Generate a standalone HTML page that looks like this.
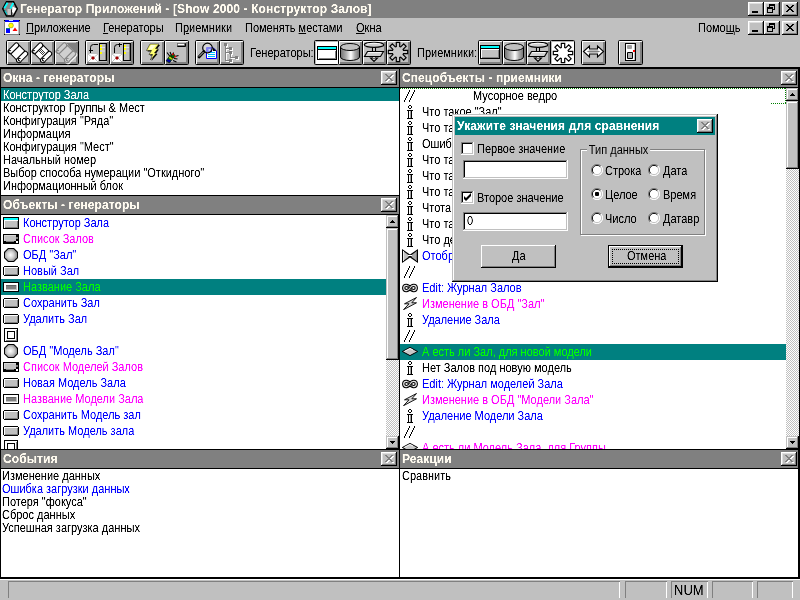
<!DOCTYPE html>
<html><head><meta charset="utf-8">
<style>
*{margin:0;padding:0;box-sizing:border-box}
html,body{width:800px;height:600px;overflow:hidden;background:#c0c0c0}
body{position:relative;font-family:"Liberation Sans",sans-serif;font-size:11px;line-height:13px;color:#000;-webkit-font-smoothing:none}
.a{position:absolute}
.t,.hd span,.st span{filter:url(#thr)}
.t{position:absolute;white-space:nowrap;font-size:12px;transform:scaleX(.9167);transform-origin:0 0}
.t.b{font-weight:bold;transform:none}
.cap svg,.sb svg{display:block}
.cap{position:absolute;width:16px;height:14px;background:#c0c0c0;box-shadow:inset -1px -1px 0 #000,inset 1px 1px 0 #fff,inset -2px -2px 0 #808080,inset 2px 2px 0 #dfdfdf}
.tb{position:absolute;top:40px;width:25px;height:25px;background:#c0c0c0;border:1px solid #000;border-radius:1.5px;box-shadow:inset 1px 1px 0 #fff,inset -2px -2px 0 #808080}
.ti{position:absolute;left:-1px;top:-1px}
.tb.dn{background:#fff;box-shadow:inset 1px 1px 0 #b8b8b8}
.hd{position:absolute;height:18px;background:#808080;color:#fffbf0;font-weight:bold;font-size:12px;line-height:18px;white-space:nowrap}
.hd span{position:absolute;left:2px;top:0;letter-spacing:.08px}
.ln{position:absolute;background:#000}
.w{position:absolute;background:#fff;overflow:hidden}
.r13{position:absolute;left:0;height:13px;line-height:13px;white-space:nowrap;width:100%}
.r16{position:absolute;left:0;height:16px;line-height:16px;white-space:nowrap;width:100%}
.sel{background:#008080}
.bl{color:#00f}.mg{color:#f0f}.gr{color:#0f0}.wh{color:#fff}
.sb{position:absolute;width:13px;background:#c0c0c0;box-shadow:inset -1px -1px 0 #000,inset 1px 1px 0 #c0c0c0,inset -2px -2px 0 #808080,inset 2px 2px 0 #fff}
.trk{position:absolute;width:13px;background-image:conic-gradient(#fff 25%,#c0c0c0 0 50%,#fff 0 75%,#c0c0c0 0);background-size:2px 2px}

.sunk{position:absolute;background:#fff;box-shadow:inset -1px -1px 0 #fff,inset 1px 1px 0 #808080,inset -2px -2px 0 #c0c0c0,inset 2px 2px 0 #000}
.pb{position:absolute;width:75px;height:23px;background:#c0c0c0;text-align:center;line-height:23px;box-shadow:inset -1px -1px 0 #000,inset 1px 1px 0 #fff,inset -2px -2px 0 #808080,inset 2px 2px 0 #c0c0c0}
.pb .t{line-height:13px}
.rd{position:absolute;width:12px;height:12px}
.st{position:absolute;top:581px;height:17px;box-shadow:inset 1px 1px 0 #808080,inset -1px 0 0 #fff}
u{text-decoration:underline}
</style></head><body>
<svg width="0" height="0" style="position:absolute" shape-rendering="crispEdges"><defs>
<radialGradient id="gob" cx="45%" cy="50%" r="55%"><stop offset="0" stop-color="#fff"/><stop offset=".55" stop-color="#d0d0d0"/><stop offset="1" stop-color="#909090"/></radialGradient>
<symbol id="iw" viewBox="0 0 16 12"><rect width="16" height="12" fill="#000"/><rect x="1" y="1" width="14" height="10" fill="#c0c0c0"/><rect x="1" y="1" width="14" height="2" fill="#0ff"/><rect x="1" y="3" width="14" height="1" fill="#fff"/><rect x="1" y="3" width="1" height="8" fill="#fff"/><rect x="14" y="4" width="1" height="7" fill="#808080"/><rect x="2" y="10" width="13" height="1" fill="#808080"/></symbol>
<symbol id="il" viewBox="0 0 16 10"><rect width="16" height="10" fill="#000"/><rect x="1" y="1" width="12" height="6" fill="#c0c0c0"/><rect x="1" y="1" width="12" height="1" fill="#d8d8d8"/><rect x="1" y="1" width="1" height="6" fill="#d8d8d8"/><rect x="3" y="7" width="8" height="1" fill="#808080"/><rect x="13" y="3" width="2" height="2" fill="#808080"/><rect x="13" y="7" width="2" height="2" fill="#fff"/></symbol>
<symbol id="io" viewBox="0 0 14 14"><polygon points="4,0 10,0 14,4 14,10 10,14 4,14 0,10 0,4" fill="#000"/><polygon points="4.5,1 9.5,1 13,4.5 13,9.5 9.5,13 4.5,13 1,9.5 1,4.5" fill="url(#gob)"/></symbol>
<symbol id="ib" viewBox="0 0 16 10"><rect x="1" width="14" height="10" fill="#000"/><rect y="1" width="16" height="8" fill="#000"/><rect x="1" y="1" width="14" height="8" fill="#c0c0c0"/><rect x="1" y="1" width="14" height="1" fill="#fff"/><rect x="1" y="1" width="1" height="8" fill="#fff"/><rect x="14" y="2" width="1" height="7" fill="#808080"/><rect x="2" y="8" width="13" height="1" fill="#808080"/></symbol>
<symbol id="ie" viewBox="0 0 16 10"><rect width="16" height="10" fill="#000"/><rect x="1" y="1" width="14" height="8" fill="#fff"/><rect x="3" y="3" width="10" height="4" fill="#808080"/><rect x="3" y="3" width="10" height="1" fill="#606060"/><rect x="13" y="3" width="1" height="5" fill="#c0c0c0"/><rect x="3" y="7" width="11" height="1" fill="#c0c0c0"/></symbol>
<symbol id="is" viewBox="0 0 14 14"><rect width="14" height="14" fill="#000"/><rect x="1" y="1" width="12" height="12" fill="#fff"/><rect x="12" y="2" width="1" height="11" fill="#808080"/><rect x="2" y="12" width="11" height="1" fill="#808080"/><rect x="3" y="3" width="8" height="8" fill="#000"/><rect x="4" y="4" width="6" height="6" fill="#fff"/></symbol>
<symbol id="ii" viewBox="0 0 7 14"><rect x="2" y="0" width="2" height="1"/><rect x="1" y="1" width="1" height="2"/><rect x="4" y="1" width="1" height="2"/><rect x="2" y="3" width="2" height="1"/><rect x="0" y="5" width="6" height="1"/><rect x="1" y="6" width="1" height="7"/><rect x="4" y="6" width="1" height="7"/><rect x="3" y="6" width="1" height="7" fill="#a0a0a0"/><rect x="0" y="13" width="6" height="1"/></symbol>
<symbol id="sl" viewBox="0 0 11 12"><path d="M5 0h1v2h-1zM4 2h1v2h-1zM3 4h1v2h-1zM2 6h1v2h-1zM1 8h1v2h-1zM0 10h1v2h-1zM10 0h1v2h-1zM9 2h1v2h-1zM8 4h1v2h-1zM7 6h1v2h-1zM6 8h1v2h-1zM5 10h1v2h-1z"/></symbol>
<symbol id="bt" viewBox="0 0 16 14"><polygon points="0,0 8,5.5 16,0 16,14 8,8.5 0,14" fill="#000"/><polygon points="1,2 6.5,6 6.5,8 1,12" fill="#c0c0c0"/><polygon points="15,2 9.5,6 9.5,8 15,12" fill="#a8a8a8"/><rect x="6" y="6" width="4" height="1" fill="#fff"/><rect x="1" y="2" width="1" height="10" fill="#e8e8e8"/><rect x="14" y="3" width="1" height="9" fill="#808080"/></symbol>
<symbol id="ch" viewBox="0 0 16 10" shape-rendering="auto"><path id="inf" d="M8 5C6.300 1.800 2 1.300 1.700 5C2 8.700 6.300 8.200 8 5C9.700 1.800 14 1.300 14.300 5C14 8.700 9.700 8.200 8 5z" fill="none" stroke="#000" stroke-width="3.300"/><path d="M8 5C6.300 1.800 2 1.300 1.700 5C2 8.700 6.300 8.200 8 5C9.700 1.800 14 1.300 14.300 5C14 8.700 9.700 8.200 8 5z" fill="none" stroke="#e8e8e8" stroke-width="1.200"/><path d="M6 2.500L10 7.500" stroke="#000" stroke-width=".8"/></symbol>
<symbol id="lt" viewBox="0 0 14 13" shape-rendering="auto"><polygon points="13.500,0.500 1.500,6.800 6,6.800 0.500,12.700 13.500,5.800 8.800,5.800" fill="#d8d8d8" stroke="#000" stroke-width=".9"/></symbol>
<symbol id="dm" viewBox="0 0 16 9" shape-rendering="auto"><polygon points="0.300,4.500 8,0.400 15.700,4.500 8,8.600" fill="#c8c8c8" stroke="#000" stroke-width="1"/><path d="M2.500 4.300L8 1.500L11 3" fill="none" stroke="#fff" stroke-width=".9"/></symbol>
<symbol id="gx" viewBox="0 0 16 14"><path d="M4 3h2v1h-2zM10 3h2v1h-2zM5 4h2v1h-2zM9 4h2v1h-2zM6 5h4v1h-4zM7 6h2v1h-2zM6 7h4v1h-4zM5 8h2v1h-2zM9 8h2v1h-2zM4 9h2v1h-2zM10 9h2v1h-2z"/></symbol>
<symbol id="gxd" viewBox="0 0 16 14"><path d="M5 4h2v1h-2zM11 4h2v1h-2zM6 5h2v1h-2zM10 5h2v1h-2zM7 6h4v1h-4zM8 7h2v1h-2zM7 8h4v1h-4zM6 9h2v1h-2zM10 9h2v1h-2zM5 10h2v1h-2zM11 10h2v1h-2z" fill="#fff"/><path d="M4 3h2v1h-2zM10 3h2v1h-2zM5 4h2v1h-2zM9 4h2v1h-2zM6 5h4v1h-4zM7 6h2v1h-2zM6 7h4v1h-4zM5 8h2v1h-2zM9 8h2v1h-2zM4 9h2v1h-2zM10 9h2v1h-2z" fill="#808080"/></symbol>
<symbol id="gr" viewBox="0 0 16 14"><path d="M5 2h6v1h-6zM5 3h6v1h-6zM5 4h1v1h-1zM10 4h1v1h-1zM3 5h6v1h-6zM10 5h1v1h-1zM3 6h6v1h-6zM10 6h1v1h-1zM3 7h1v1h-1zM8 7h3v1h-3zM3 8h1v1h-1zM8 8h1v1h-1zM3 9h1v1h-1zM8 9h1v1h-1zM3 10h6v1h-6z"/></symbol>
<symbol id="gm" viewBox="0 0 16 14"><rect x="4" y="9" width="6" height="2"/></symbol>
<symbol id="gup" viewBox="0 0 13 13"><path d="M6 5h1v1h-1zM5 6h3v1h-3zM4 7h5v1h-5z"/></symbol>
<symbol id="gdn" viewBox="0 0 13 13"><path d="M4 5h5v1h-5zM5 6h3v1h-3zM6 7h1v1h-1z"/></symbol>
<symbol id="rad" viewBox="0 0 12 12"><circle cx="6" cy="6" r="5.5" fill="#fff"/><path d="M10 2A5.600 5.600 0 1 0 2 10" fill="none" stroke="#808080" stroke-width="1"/><path d="M2 10A5.600 5.600 0 1 0 10 2" fill="none" stroke="#fff" stroke-width="1"/><path d="M9.300 2.700A4.600 4.600 0 1 0 2.700 9.300" fill="none" stroke="#000" stroke-width="1"/><path d="M2.700 9.300A4.600 4.600 0 1 0 9.300 2.700" fill="none" stroke="#c0c0c0" stroke-width="1"/></symbol>
<filter id="thr" x="0" y="0" width="100%" height="100%" color-interpolation-filters="sRGB"><feComponentTransfer><feFuncA type="table" tableValues="0 .15 .95 1"/></feComponentTransfer></filter>
<symbol id="t1" viewBox="0 0 25 25"><g fill="#fff" stroke="#000" stroke-width="1" shape-rendering="auto" transform="translate(11.900 12.600) rotate(-45)"><rect x="-6.100" y="-4" width="12.200" height="7.800"/><path d="M-4.500 -8.500H4.200a2.250 2.250 0 0 1 0 4.500H-4.500a2.250 2.250 0 0 1 0-4.500z"/><path d="M-5.600 3.800H4.500a2.300 2.300 0 0 1 0 4.600H-3.500a2.300 2.300 0 0 1-2.100-4.600z"/><path d="M-5.500 -5a1.300 1.300 0 1 1 1.800 -1.200M-4.200 7.300a1.300 1.300 0 1 1 1.800 -1.200" fill="none"/></g></symbol>
<symbol id="t2" viewBox="0 0 25 25"><g fill="#fff" stroke="#000" stroke-width="1" shape-rendering="auto" transform="translate(11.900 12.600) rotate(-45)"><rect x="-6.100" y="-4" width="12.200" height="7.800"/><path d="M-4.500 -8.500H4.200a2.250 2.250 0 0 1 0 4.500H-4.500a2.250 2.250 0 0 1 0-4.500z"/><path d="M-5.600 3.800H4.500a2.300 2.300 0 0 1 0 4.600H-3.500a2.300 2.300 0 0 1-2.100-4.600z"/><path d="M-5.500 -5a1.300 1.300 0 1 1 1.800 -1.200M-4.200 7.300a1.300 1.300 0 1 1 1.800 -1.200" fill="none"/></g><g fill="#404040"><rect x="10" y="10" width="1" height="1"/><rect x="12" y="10" width="1" height="1"/><rect x="11" y="11" width="1" height="1"/><rect x="13" y="11" width="1" height="1"/><rect x="10" y="12" width="1" height="1"/><rect x="12" y="12" width="1" height="1"/><rect x="14" y="12" width="1" height="1"/><rect x="11" y="13" width="1" height="1"/><rect x="13" y="13" width="1" height="1"/><rect x="12" y="14" width="1" height="1"/><rect x="11" y="9" width="1" height="1"/><rect x="9" y="11" width="1" height="1"/></g></symbol>
<symbol id="t3" viewBox="0 0 25 25"><rect x="12" y="3" width="11" height="9" fill="#808080"/><g transform="translate(1 1)"><g fill="none" stroke="#fff" stroke-width="1" shape-rendering="auto" transform="translate(11.900 12.600) rotate(-45)"><rect x="-6.100" y="-4" width="12.200" height="7.800"/><path d="M-4.500 -8.500H4.200a2.250 2.250 0 0 1 0 4.500H-4.500a2.250 2.250 0 0 1 0-4.500z"/><path d="M-5.600 3.800H4.500a2.300 2.300 0 0 1 0 4.600H-3.500a2.300 2.300 0 0 1-2.100-4.600z"/><path d="M-5.500 -5a1.300 1.300 0 1 1 1.800 -1.200M-4.200 7.300a1.300 1.300 0 1 1 1.800 -1.200" fill="none"/></g></g><g fill="#d0d0d0" stroke="#808080" stroke-width="1" shape-rendering="auto" transform="translate(11.900 12.600) rotate(-45)"><rect x="-6.100" y="-4" width="12.200" height="7.800"/><path d="M-4.500 -8.500H4.200a2.250 2.250 0 0 1 0 4.500H-4.500a2.250 2.250 0 0 1 0-4.500z"/><path d="M-5.600 3.800H4.500a2.300 2.300 0 0 1 0 4.600H-3.500a2.300 2.300 0 0 1-2.100-4.600z"/><path d="M-5.500 -5a1.300 1.300 0 1 1 1.800 -1.200M-4.200 7.300a1.300 1.300 0 1 1 1.800 -1.200" fill="none"/></g></symbol>
<symbol id="t4" viewBox="0 0 25 25"><g transform="translate(1 0)"><rect x="2" y="14" width="10" height="8" fill="#fff"/><path d="M2 14l5 4l5-4M2 22l4-4M12 22l-4-4" fill="none" stroke="#b0b0b0" stroke-width=".8" shape-rendering="auto"/><rect x="6" y="17" width="2" height="2" fill="#a00000"/><rect x="5" y="17.500" width="4" height="1" fill="#a00000"/><rect x="6.500" y="16" width="1" height="4" fill="#a00000"/><rect x="13" y="3" width="8" height="18" fill="#000"/><rect x="14" y="4" width="5" height="16" fill="#c0c0c0"/><rect x="19" y="4" width="1" height="16" fill="#808080"/><rect x="14" y="7" width="5" height="1" fill="#e0e0e0"/><rect x="14" y="10.500" width="5" height="1" fill="#e0e0e0"/><rect x="14" y="5" width="2" height="2" fill="#ff0"/><rect x="14" y="8" width="2" height="2" fill="#ff0"/><rect x="14" y="12" width="2" height="2" fill="#ff0"/><path d="M4.500 13V7.500a3 3 0 0 1 3-3H12" fill="none" stroke="#000" stroke-width="1" shape-rendering="auto"/><rect x="3" y="10" width="4" height="1"/></g></symbol>
<symbol id="t5" viewBox="0 0 25 25"><g transform="translate(1 0)"><rect x="2" y="14" width="10" height="8" fill="#fff"/><path d="M2 14l5 4l5-4M2 22l4-4M12 22l-4-4" fill="none" stroke="#b0b0b0" stroke-width=".8" shape-rendering="auto"/><rect x="6" y="17" width="2" height="2" fill="#a00000"/><rect x="5" y="17.500" width="4" height="1" fill="#a00000"/><rect x="6.500" y="16" width="1" height="4" fill="#a00000"/><rect x="13" y="3" width="8" height="18" fill="#000"/><rect x="14" y="4" width="5" height="16" fill="#c0c0c0"/><rect x="19" y="4" width="1" height="16" fill="#808080"/><rect x="14" y="7" width="5" height="1" fill="#e0e0e0"/><rect x="14" y="10.500" width="5" height="1" fill="#e0e0e0"/><rect x="14" y="5" width="2" height="2" fill="#ff0"/><rect x="14" y="8" width="2" height="2" fill="#ff0"/><rect x="14" y="12" width="2" height="2" fill="#ff0"/><path d="M4.500 13V7.500a3 3 0 0 1 3-3H12" fill="none" stroke="#000" stroke-width="1" shape-rendering="auto"/><rect x="9" y="3" width="1" height="4"/></g></symbol>
<symbol id="t6" viewBox="0 0 25 25"><g shape-rendering="auto"><polygon points="11,5 20,5 16.500,9.500 19,9.500 15.500,14 17.500,14 11.500,21 13.500,15.500 10,15.500 12.500,11.500 7.500,11.500" fill="#000"/><polygon points="10,4 19,4 15.500,8.500 18,8.500 14.500,13 16.500,13 10.500,20 12.500,14.500 9,14.500 11.500,10.500 6.500,10.500" fill="#ffff70" stroke="#000" stroke-width=".5"/><polygon points="11,5 16,5 12,9.500 8.500,9.500" fill="#fff" opacity=".7"/></g></symbol>
<symbol id="t7" viewBox="0 0 25 25"><rect x="13" y="3" width="9" height="4" rx="1" fill="#000"/><rect x="13" y="3" width="8" height="3" rx="1" fill="#808080"/><rect x="14" y="4" width="6" height="1" fill="#fff"/><g shape-rendering="auto"><path d="M3 12.500l3 4M6 12l1.500 3.500M9.500 12.500l-.5 3M10 18.500l3.500 .5M9 20.500l3.500 1.500M11 16.500l3.500-1" stroke="#000" stroke-width="1.100" fill="none"/><polygon points="2,21 6,15.500 9.500,17.500 5.500,22.800" fill="#008000" stroke="#000" stroke-width=".7"/><polygon points="2.300,20.800 3.800,18.800 7,20.800 5.500,22.600" fill="#0000a0"/><polygon points="4.600,17.800 5.600,16.400 8.800,18.300 7.800,19.700" fill="#c8c800"/><circle cx="9" cy="16" r="1.900" fill="#006000" stroke="#000" stroke-width=".5"/><rect x="8" y="13.500" width="1.600" height="1.600" fill="#f00"/><rect x="10.500" y="15.800" width="1.600" height="1.600" fill="#f00"/></g></symbol>
<symbol id="t8" viewBox="0 0 25 25"><g shape-rendering="auto" transform="translate(1 0)"><polygon points="10.500,7.500 17,7.500 20.500,11 20.500,18.500 10.500,18.500" fill="#fff" stroke="#00f" stroke-width="1"/><path d="M12 12.500h7M12 14.500h7M12 16.500h7" stroke="#00c0ff" stroke-width="1"/><rect x="11" y="8" width="5" height="4" fill="#00f"/><rect x="12.500" y="9" width="2" height="2" fill="#80c0ff"/><polygon points="17,7.500 20.500,11 17,11" fill="#000"/><circle cx="11.500" cy="8" r="4.800" fill="#e8e8e8" fill-opacity=".55" stroke="#000" stroke-width="1.200"/><path d="M8 11.500L3 17" stroke="#000" stroke-width="2.800" stroke-linecap="round"/><path d="M7.500 12L3 16.500" stroke="#fff" stroke-width=".8"/></g></symbol>
<symbol id="t9" viewBox="0 0 25 25"><g transform="translate(1 1)" fill="#fff"><rect x="5" y="3" width="3" height="3" fill="#fff"/><rect x="10" y="7" width="3" height="3" fill="#fff"/><rect x="10" y="11" width="3" height="3" fill="#fff"/><rect x="16" y="16" width="3" height="3" fill="#fff"/><rect x="10" y="19" width="3" height="3" fill="#fff"/><rect x="6" y="6" width="1" height="15"/><rect x="7" y="8" width="3" height="1"/><rect x="7" y="12" width="3" height="1"/><rect x="11" y="14" width="1" height="4"/><rect x="12" y="17" width="4" height="1"/><rect x="7" y="20" width="3" height="1"/></g><g transform="translate(0 0)" fill="#808080"><rect x="5" y="3" width="3" height="3" fill="#808080"/><rect x="10" y="7" width="3" height="3" fill="#808080"/><rect x="10" y="11" width="3" height="3" fill="#808080"/><rect x="16" y="16" width="3" height="3" fill="#808080"/><rect x="10" y="19" width="3" height="3" fill="#808080"/><rect x="6" y="6" width="1" height="15"/><rect x="7" y="8" width="3" height="1"/><rect x="7" y="12" width="3" height="1"/><rect x="11" y="14" width="1" height="4"/><rect x="12" y="17" width="4" height="1"/><rect x="7" y="20" width="3" height="1"/></g></symbol>
<symbol id="g1" viewBox="0 0 25 25"><g transform="translate(1 1)"><rect x="2" y="5" width="20" height="14" fill="#000"/><rect x="3" y="6" width="18" height="12" fill="#fff"/><rect x="3" y="6" width="18" height="2" fill="#0ff"/><rect x="3" y="8" width="18" height="1" fill="#000"/><rect x="3" y="9" width="18" height="1" fill="#fff"/><rect x="3" y="9" width="1" height="9" fill="#fff"/><rect x="20" y="10" width="1" height="8" fill="#808080"/><rect x="4" y="17" width="17" height="1" fill="#808080"/></g></symbol>
<symbol id="g1u" viewBox="0 0 25 25"><g transform="translate(0 0)"><rect x="2" y="5" width="20" height="14" fill="#000"/><rect x="3" y="6" width="18" height="12" fill="#c0c0c0"/><rect x="3" y="6" width="18" height="2" fill="#0ff"/><rect x="3" y="8" width="18" height="1" fill="#000"/><rect x="3" y="9" width="18" height="1" fill="#fff"/><rect x="3" y="9" width="1" height="9" fill="#fff"/><rect x="20" y="10" width="1" height="8" fill="#808080"/><rect x="4" y="17" width="17" height="1" fill="#808080"/></g></symbol>
<symbol id="g2" viewBox="0 0 25 25"><defs><linearGradient id="cyl" x1="0" x2="1" y1="0" y2="0"><stop offset="0" stop-color="#707070"/><stop offset=".3" stop-color="#b0b0b0"/><stop offset=".55" stop-color="#fff"/><stop offset=".75" stop-color="#b0b0b0"/><stop offset="1" stop-color="#707070"/></linearGradient></defs><g shape-rendering="auto"><path d="M2.500 7v10a9.500 3.500 0 0 0 19 0V7z" fill="url(#cyl)" stroke="#000" stroke-width="1"/><ellipse cx="12" cy="7" rx="9.500" ry="3.500" fill="#c0c0c0" stroke="#000" stroke-width="1"/></g></symbol>
<symbol id="g3" viewBox="0 0 25 25"><g shape-rendering="auto" fill="#d0d0d0" stroke="#000" stroke-width="1.100"><polygon points="8.500,18 15.500,18 12,21.500"/><rect x="10.500" y="6" width="3" height="12" stroke="none"/><path d="M10.500 7v4.500M13.500 7v4.500M10.500 16.500v1M13.500 16.500v1" fill="none"/><polygon points="5.500,11.500 21.500,11.500 18.500,16.500 2.500,16.500"/><ellipse cx="12" cy="4.800" rx="9.800" ry="2.600"/><path d="M4.500 4.300c3-1.300 11-1.300 14-.2" fill="none" stroke="#fff" stroke-width=".9"/><path d="M6 12.600h13" fill="none" stroke="#fff" stroke-width=".9"/></g></symbol>
<symbol id="g4" viewBox="0 0 25 25"><g shape-rendering="auto" transform="translate(0 0)"><polygon points="17.5,10.3 21.7,10.3 21.7,13.7 17.5,13.7 17.1,14.7 20.1,17.7 17.7,20.1 14.7,17.1 13.7,17.5 13.7,21.7 10.3,21.7 10.3,17.5 9.3,17.1 6.3,20.1 3.9,17.7 6.9,14.7 6.5,13.7 2.3,13.7 2.3,10.3 6.5,10.3 6.9,9.3 3.9,6.3 6.3,3.9 9.3,6.9 10.3,6.5 10.3,2.3 13.7,2.3 13.7,6.5 14.7,6.9 17.7,3.9 20.1,6.3 17.1,9.3" fill="#c8c8c8" stroke="#000" stroke-width="1.200"/></g></symbol>
<symbol id="g4d" viewBox="0 0 25 25"><g shape-rendering="auto" transform="translate(1 1)"><polygon points="17.5,10.3 21.7,10.3 21.7,13.7 17.5,13.7 17.1,14.7 20.1,17.7 17.7,20.1 14.7,17.1 13.7,17.5 13.7,21.7 10.3,21.7 10.3,17.5 9.3,17.1 6.3,20.1 3.9,17.7 6.9,14.7 6.5,13.7 2.3,13.7 2.3,10.3 6.5,10.3 6.9,9.3 3.9,6.3 6.3,3.9 9.3,6.9 10.3,6.5 10.3,2.3 13.7,2.3 13.7,6.5 14.7,6.9 17.7,3.9 20.1,6.3 17.1,9.3" fill="#fff" stroke="#000" stroke-width="1.200"/></g></symbol>
<symbol id="t10" viewBox="0 0 25 25"><g shape-rendering="auto"><polygon points="2.500,11.500 8.500,6 8.500,9 16.500,9 16.500,6 22.500,11.500 16.500,17 16.500,14 8.500,14 8.500,17" fill="#fff" stroke="#000" stroke-width="1.100"/><polygon points="5.500,11.500 8.500,10.400 16.500,10.400 19.500,11.500 16.500,12.600 8.500,12.600" fill="#808080"/></g></symbol>
<symbol id="t11" viewBox="0 0 25 25"><rect x="7" y="3" width="11" height="18" fill="#000"/><rect x="8" y="4" width="8" height="16" fill="#fff"/><rect x="16" y="4" width="1" height="16" fill="#c0c0c0"/><rect x="9" y="5" width="5" height="4" rx="1" fill="#a0a0a0"/><rect x="9" y="12" width="6" height="7" rx="1" fill="#000"/><rect x="10" y="13" width="4" height="5" fill="#b0b0b0"/><rect x="15" y="10" width="2" height="2" fill="#f00"/></symbol>
</defs></svg>

<div id="root" style="position:absolute;left:0;top:0;width:800px;height:600px;will-change:transform">

<!-- title bar -->
<div class="a" style="left:0;top:0;width:800px;height:18px;background:#808080"></div>
<div class="t b" style="left:20px;top:2px;color:#fffbf0;line-height:14px;letter-spacing:.12px">Генератор Приложений - [Show 2000 - Конструктор Залов]</div>
<div class="cap" style="left:748px;top:2px"><svg width="16" height="14"><use href="#gm"/></svg></div>
<div class="cap" style="left:764px;top:2px"><svg width="16" height="14"><use href="#gr"/></svg></div>
<div class="cap" style="left:782px;top:2px"><svg width="16" height="14"><use href="#gx"/></svg></div>

<svg class="a" style="left:2px;top:1px" width="16" height="16" shape-rendering="auto"><polygon points="4.500,0.700 11.500,0.700 15.300,7.800 11.500,15 4.500,15 0.700,7.800" fill="#8c8c8c" stroke="#000" stroke-width="1.500"/><polygon points="10.500,5.500 14.500,7.500 11.500,12.800 10,10.500" fill="#fff"/><polygon points="5.500,8 9,8 9,14 5.500,14" fill="#c4c4c4"/><path d="M5 14L2.500 9M9.500 8.500L9.500 14" stroke="#000" stroke-width=".8" fill="none"/><path d="M2.300 7.200L5.500 1.800M8.300 7.500L11.300 1.800" stroke="#0ff" stroke-width="1.800" fill="none"/><path d="M2.800 9.500L5 13.500" stroke="#00d8d8" stroke-width="1.100" fill="none"/></svg>
<svg class="a" style="left:4px;top:20px" width="16" height="15"><rect x="0" y="0" width="16" height="15" fill="#808080"/><rect x="1" y="1" width="14" height="13" fill="#fff"/><rect x="1" y="0" width="14" height="2" fill="#00f"/><rect x="5" y="0" width="4" height="1" fill="#c0e0ff"/><rect x="0" y="0" width="1" height="1" fill="#000"/><rect x="15" y="0" width="1" height="1" fill="#000"/><rect x="0" y="14" width="1" height="1" fill="#000"/><rect x="15" y="14" width="1" height="1" fill="#000"/><rect x="14" y="2" width="1" height="12" fill="#c0c0c0"/><circle cx="7" cy="5.500" r="2.400" fill="#ff0" stroke="#808000" stroke-width=".5" shape-rendering="auto"/><polygon points="8.500,11 13.500,11 11,7.500" fill="#f00" shape-rendering="auto"/><rect x="2" y="9" width="4" height="4" fill="#00f"/><rect x="2" y="8" width="4" height="1" fill="#008080"/></svg>
<!-- menu bar -->
<div class="t" style="left:26px;top:22px"><u>П</u>риложение</div>
<div class="t" style="left:103px;top:22px"><u>Г</u>енераторы</div>
<div class="t" style="left:175px;top:22px">П<u>р</u>иемники</div>
<div class="t" style="left:245px;top:22px">Поменять <u>м</u>естами</div>
<div class="t" style="left:356px;top:22px"><u>О</u>кна</div>
<div class="t" style="left:698px;top:22px">Помо<u>щ</u>ь</div>
<div class="cap" style="left:748px;top:21px"><svg width="16" height="14"><use href="#gm"/></svg></div>
<div class="cap" style="left:764px;top:21px"><svg width="16" height="14"><use href="#gr"/></svg></div>
<div class="cap" style="left:782px;top:21px"><svg width="16" height="14"><use href="#gx"/></svg></div>

<!-- toolbar -->
<div class="tb" style="left:6px"><svg class="ti" width="25" height="25"><use href="#t1"/></svg></div>
<div class="tb" style="left:30px"><svg class="ti" width="25" height="25"><use href="#t2"/></svg></div>
<div class="tb" style="left:54px"><svg class="ti" width="25" height="25"><use href="#t3"/></svg></div>
<div class="tb" style="left:85px"><svg class="ti" width="25" height="25"><use href="#t4"/></svg></div>
<div class="tb" style="left:109px"><svg class="ti" width="25" height="25"><use href="#t5"/></svg></div>
<div class="tb" style="left:140px"><svg class="ti" width="25" height="25"><use href="#t6"/></svg></div>
<div class="tb" style="left:164px"><svg class="ti" width="25" height="25"><use href="#t7"/></svg></div>
<div class="tb" style="left:195px"><svg class="ti" width="25" height="25"><use href="#t8"/></svg></div>
<div class="tb" style="left:219px"><svg class="ti" width="25" height="25"><use href="#t9"/></svg></div>
<div class="t" style="left:250px;top:47px">Генераторы:</div>
<div class="tb dn" style="left:314px"><svg class="ti" width="25" height="25"><use href="#g1"/></svg></div>
<div class="tb" style="left:338px"><svg class="ti" width="25" height="25"><use href="#g2"/></svg></div>
<div class="tb" style="left:362px"><svg class="ti" width="25" height="25"><use href="#g3"/></svg></div>
<div class="tb" style="left:386px"><svg class="ti" width="25" height="25"><use href="#g4"/></svg></div>
<div class="t" style="left:417px;top:47px">Приемники:</div>
<div class="tb" style="left:478px"><svg class="ti" width="25" height="25"><use href="#g1u"/></svg></div>
<div class="tb" style="left:502px"><svg class="ti" width="25" height="25"><use href="#g2"/></svg></div>
<div class="tb" style="left:526px"><svg class="ti" width="25" height="25"><use href="#g3"/></svg></div>
<div class="tb dn" style="left:550px"><svg class="ti" width="25" height="25"><use href="#g4d"/></svg></div>
<div class="tb" style="left:581px"><svg class="ti" width="25" height="25"><use href="#t10"/></svg></div>
<div class="tb" style="left:618px"><svg class="ti" width="25" height="25"><use href="#t11"/></svg></div>

<!-- frame lines -->
<div class="ln" style="left:0;top:67px;width:800px;height:2px"></div>
<div class="ln" style="left:0;top:67px;width:1px;height:512px"></div>
<div class="ln" style="left:399px;top:67px;width:1px;height:512px"></div>
<div class="ln" style="left:798px;top:67px;width:2px;height:512px"></div>
<div class="ln" style="left:0;top:577px;width:800px;height:2px"></div>

<!-- left: Окна - генераторы -->
<div class="hd" style="left:1px;top:69px;width:398px"><span>Окна - генераторы</span></div>
<div class="cap" style="left:381px;top:71px"><svg width="16" height="14"><use href="#gxd"/></svg></div>
<div class="ln" style="left:0;top:87px;width:400px;height:1px"></div>
<div class="w" id="p1" style="left:1px;top:88px;width:398px;height:107px">
<div class="r13 sel wh" style="top:0"><span class="t" style="left:2px;top:1px">Конструтор Зала</span></div>
<div class="r13" style="top:13px"><span class="t" style="left:2px;top:1px">Конструктор Группы &amp; Мест</span></div>
<div class="r13" style="top:26px"><span class="t" style="left:2px;top:1px">Конфигурация "Ряда"</span></div>
<div class="r13" style="top:39px"><span class="t" style="left:2px;top:1px">Информация</span></div>
<div class="r13" style="top:52px"><span class="t" style="left:2px;top:1px">Конфигурация "Мест"</span></div>
<div class="r13" style="top:65px"><span class="t" style="left:2px;top:1px">Начальный номер</span></div>
<div class="r13" style="top:78px"><span class="t" style="left:2px;top:1px">Выбор способа нумерации "Откидного"</span></div>
<div class="r13" style="top:91px"><span class="t" style="left:2px;top:1px">Информационный блок</span></div>
</div>

<!-- left: Объекты - генераторы -->
<div class="ln" style="left:0;top:195px;width:400px;height:1px"></div>
<div class="hd" style="left:1px;top:196px;width:398px"><span>Объекты - генераторы</span></div>
<div class="cap" style="left:381px;top:198px"><svg width="16" height="14"><use href="#gxd"/></svg></div>
<div class="ln" style="left:0;top:214px;width:400px;height:1px"></div>
<div class="w" id="p2" style="left:1px;top:215px;width:385px;height:234px">
<div class="r16 bl" style="top:0px"><svg class="a" style="left:2px;top:2px" width="16" height="12"><use href="#iw"/></svg><span class="t" style="left:22px;top:0">Конструтор Зала</span></div>
<div class="r16 mg" style="top:16px"><svg class="a" style="left:2px;top:3px" width="16" height="10"><use href="#il"/></svg><span class="t" style="left:22px;top:0">Список Залов</span></div>
<div class="r16 bl" style="top:32px"><svg class="a" style="left:3px;top:1px" width="14" height="14"><use href="#io"/></svg><span class="t" style="left:22px;top:0">ОБД "Зал"</span></div>
<div class="r16 bl" style="top:48px"><svg class="a" style="left:2px;top:3px" width="16" height="10"><use href="#ib"/></svg><span class="t" style="left:22px;top:0">Новый Зал</span></div>
<div class="r16 gr sel" style="top:64px"><svg class="a" style="left:2px;top:3px" width="16" height="10"><use href="#ie"/></svg><span class="t" style="left:22px;top:0">Название Зала</span></div>
<div class="r16 bl" style="top:80px"><svg class="a" style="left:2px;top:3px" width="16" height="10"><use href="#ib"/></svg><span class="t" style="left:22px;top:0">Сохранить Зал</span></div>
<div class="r16 bl" style="top:96px"><svg class="a" style="left:2px;top:3px" width="16" height="10"><use href="#ib"/></svg><span class="t" style="left:22px;top:0">Удалить Зал</span></div>
<div class="r16 " style="top:112px"><svg class="a" style="left:3px;top:1px" width="14" height="14"><use href="#is"/></svg><span class="t" style="left:22px;top:0"></span></div>
<div class="r16 bl" style="top:128px"><svg class="a" style="left:3px;top:1px" width="14" height="14"><use href="#io"/></svg><span class="t" style="left:22px;top:0">ОБД "Модель Зал"</span></div>
<div class="r16 mg" style="top:144px"><svg class="a" style="left:2px;top:3px" width="16" height="10"><use href="#il"/></svg><span class="t" style="left:22px;top:0">Список Моделей Залов</span></div>
<div class="r16 bl" style="top:160px"><svg class="a" style="left:2px;top:3px" width="16" height="10"><use href="#ib"/></svg><span class="t" style="left:22px;top:0">Новая Модель Зала</span></div>
<div class="r16 mg" style="top:176px"><svg class="a" style="left:2px;top:3px" width="16" height="10"><use href="#ie"/></svg><span class="t" style="left:22px;top:0">Название Модели Зала</span></div>
<div class="r16 bl" style="top:192px"><svg class="a" style="left:2px;top:3px" width="16" height="10"><use href="#ib"/></svg><span class="t" style="left:22px;top:0">Сохранить Модель зал</span></div>
<div class="r16 bl" style="top:208px"><svg class="a" style="left:2px;top:3px" width="16" height="10"><use href="#ib"/></svg><span class="t" style="left:22px;top:0">Удалить Модель зала</span></div>
<div class="r16 " style="top:224px"><svg class="a" style="left:3px;top:1px" width="14" height="14"><use href="#is"/></svg><span class="t" style="left:22px;top:0"></span></div>
</div>
<div class="trk" style="left:386px;top:215px;height:234px"></div>
<div class="sb" style="left:386px;top:215px;height:13px"><svg width="13" height="13"><use href="#gup"/></svg></div>
<div class="sb" style="left:386px;top:228px;height:132px"></div>
<div class="sb" style="left:386px;top:436px;height:13px"><svg width="13" height="13"><use href="#gdn"/></svg></div>

<!-- left: События -->
<div class="ln" style="left:0;top:449px;width:800px;height:1px"></div>
<div class="hd" style="left:1px;top:450px;width:398px"><span>События</span></div>
<div class="cap" style="left:381px;top:452px"><svg width="16" height="14"><use href="#gxd"/></svg></div>
<div class="ln" style="left:0;top:468px;width:800px;height:1px"></div>
<div class="w" id="p3" style="left:1px;top:469px;width:398px;height:108px">
<div class="r13" style="top:0"><span class="t" style="left:1px;top:1px">Изменение данных</span></div>
<div class="r13 bl" style="top:13px"><span class="t" style="left:1px;top:1px">Ошибка загрузки данных</span></div>
<div class="r13" style="top:26px"><span class="t" style="left:1px;top:1px">Потеря "фокуса"</span></div>
<div class="r13" style="top:39px"><span class="t" style="left:1px;top:1px">Сброс данных</span></div>
<div class="r13" style="top:52px"><span class="t" style="left:1px;top:1px">Успешная загрузка данных</span></div>
</div>

<!-- right: Спецобъекты - приемники -->
<div class="hd" style="left:400px;top:69px;width:398px"><span>Спецобъекты - приемники</span></div>
<div class="cap" style="left:781px;top:71px"><svg width="16" height="14"><use href="#gxd"/></svg></div>
<div class="ln" style="left:400px;top:87px;width:400px;height:1px"></div>
<div class="w" id="p4" style="left:400px;top:88px;width:386px;height:361px">
<div class="r16 " style="top:0px"><svg class="a" style="left:4px;top:2px" width="11" height="12"><use href="#sl"/></svg><span class="t" style="left:73px;top:0">Мусорное ведро</span></div>
<div class="r16 " style="top:16px"><svg class="a" style="left:7px;top:1px" width="7" height="14"><use href="#ii"/></svg><span class="t" style="left:22px;top:0">Что такое "Зал"</span></div>
<div class="r16 " style="top:32px"><svg class="a" style="left:7px;top:1px" width="7" height="14"><use href="#ii"/></svg><span class="t" style="left:22px;top:0">Что такое "Зал"</span></div>
<div class="r16 " style="top:48px"><svg class="a" style="left:7px;top:1px" width="7" height="14"><use href="#ii"/></svg><span class="t" style="left:22px;top:0">Ошибка</span></div>
<div class="r16 " style="top:64px"><svg class="a" style="left:7px;top:1px" width="7" height="14"><use href="#ii"/></svg><span class="t" style="left:22px;top:0">Что такое</span></div>
<div class="r16 " style="top:80px"><svg class="a" style="left:7px;top:1px" width="7" height="14"><use href="#ii"/></svg><span class="t" style="left:22px;top:0">Что такое</span></div>
<div class="r16 " style="top:96px"><svg class="a" style="left:7px;top:1px" width="7" height="14"><use href="#ii"/></svg><span class="t" style="left:22px;top:0">Что такое</span></div>
<div class="r16 " style="top:112px"><svg class="a" style="left:7px;top:1px" width="7" height="14"><use href="#ii"/></svg><span class="t" style="left:22px;top:0">Чтотакое</span></div>
<div class="r16 " style="top:128px"><svg class="a" style="left:7px;top:1px" width="7" height="14"><use href="#ii"/></svg><span class="t" style="left:22px;top:0">Что такое</span></div>
<div class="r16 " style="top:144px"><svg class="a" style="left:7px;top:1px" width="7" height="14"><use href="#ii"/></svg><span class="t" style="left:22px;top:0">Что делать</span></div>
<div class="r16 bl" style="top:160px"><svg class="a" style="left:2px;top:1px" width="16" height="14"><use href="#bt"/></svg><span class="t" style="left:22px;top:0">Отображение</span></div>
<div class="r16 " style="top:176px"><svg class="a" style="left:4px;top:2px" width="11" height="12"><use href="#sl"/></svg><span class="t" style="left:22px;top:0"></span></div>
<div class="r16 bl" style="top:192px"><svg class="a" style="left:2px;top:3px" width="16" height="10"><use href="#ch"/></svg><span class="t" style="left:22px;top:0">Edit: Журнал Залов</span></div>
<div class="r16 mg" style="top:208px"><svg class="a" style="left:3px;top:1px" width="14" height="13"><use href="#lt"/></svg><span class="t" style="left:22px;top:0">Изменение в ОБД "Зал"</span></div>
<div class="r16 bl" style="top:224px"><svg class="a" style="left:7px;top:1px" width="7" height="14"><use href="#ii"/></svg><span class="t" style="left:22px;top:0">Удаление Зала</span></div>
<div class="r16 " style="top:240px"><svg class="a" style="left:4px;top:2px" width="11" height="12"><use href="#sl"/></svg><span class="t" style="left:22px;top:0"></span></div>
<div class="r16 gr sel" style="top:256px"><svg class="a" style="left:2px;top:3px" width="16" height="9"><use href="#dm"/></svg><span class="t" style="left:22px;top:0">А есть ли Зал, для новой модели</span></div>
<div class="r16 " style="top:272px"><svg class="a" style="left:7px;top:1px" width="7" height="14"><use href="#ii"/></svg><span class="t" style="left:22px;top:0">Нет Залов под новую модель</span></div>
<div class="r16 bl" style="top:288px"><svg class="a" style="left:2px;top:3px" width="16" height="10"><use href="#ch"/></svg><span class="t" style="left:22px;top:0">Edit: Журнал моделей Зала</span></div>
<div class="r16 mg" style="top:304px"><svg class="a" style="left:3px;top:1px" width="14" height="13"><use href="#lt"/></svg><span class="t" style="left:22px;top:0">Изменение в ОБД "Модели Зала"</span></div>
<div class="r16 bl" style="top:320px"><svg class="a" style="left:7px;top:1px" width="7" height="14"><use href="#ii"/></svg><span class="t" style="left:22px;top:0">Удаление Модели Зала</span></div>
<div class="r16 " style="top:336px"><svg class="a" style="left:4px;top:2px" width="11" height="12"><use href="#sl"/></svg><span class="t" style="left:22px;top:0"></span></div>
<div class="r16 mg" style="top:352px"><svg class="a" style="left:2px;top:3px" width="16" height="9"><use href="#dm"/></svg><span class="t" style="left:22px;top:0">А есть ли Модель Зала, для Группы</span></div>
</div>
<div class="a" style="left:400px;top:88px;width:386px;height:1px;background-image:repeating-linear-gradient(90deg,#008000 0 1px,#fff 1px 2px)"></div>
<div class="a" style="left:785px;top:88px;width:1px;height:16px;background-image:repeating-linear-gradient(180deg,#008000 0 1px,#fff 1px 2px)"></div>
<div class="a" style="left:771px;top:103px;width:15px;height:1px;background-image:repeating-linear-gradient(90deg,#008000 0 1px,#fff 1px 2px)"></div>
<div class="trk" style="left:786px;top:88px;height:361px"></div>
<div class="sb" style="left:786px;top:88px;height:13px"><svg width="13" height="13"><use href="#gup"/></svg></div>
<div class="sb" style="left:786px;top:101px;height:68px"></div>
<div class="sb" style="left:786px;top:436px;height:13px"><svg width="13" height="13"><use href="#gdn"/></svg></div>

<!-- right: Реакции -->
<div class="hd" style="left:400px;top:450px;width:398px"><span>Реакции</span></div>
<div class="cap" style="left:781px;top:452px"><svg width="16" height="14"><use href="#gxd"/></svg></div>
<div class="w" id="p5" style="left:400px;top:469px;width:398px;height:108px">
<div class="r13" style="top:0"><span class="t" style="left:2px;top:1px">Сравнить</span></div>
</div>

<!-- status bar -->
<div class="a" style="left:0;top:579px;width:800px;height:1px;background:#fff"></div>
<div class="st" style="left:8px;width:612px"></div>
<div class="st" style="left:625px;width:42px"></div>
<div class="st" style="left:671px;width:37px"><span style="position:absolute;left:3px;top:1px;font-size:14px;line-height:16px;transform:scaleX(.93);transform-origin:0 0">NUM</span></div>
<div class="st" style="left:712px;width:41px"></div>
<div class="st" style="left:757px;width:36px"></div>

<!-- dialog -->
<div class="a" id="dlg" style="left:452px;top:114px;width:266px;height:168px;background:#c0c0c0;box-shadow:inset -1px -1px 0 #000,inset 1px 1px 0 #c0c0c0,inset -2px -2px 0 #808080,inset 2px 2px 0 #fff">
<div class="a" style="left:3px;top:3px;width:260px;height:18px;background:#008080"></div>
<div class="t b" style="left:5px;top:5px;color:#fff;line-height:14px;letter-spacing:.12px">Укажите значения для сравнения</div>
<div class="cap" style="left:245px;top:5px"><svg width="16" height="14"><use href="#gxd"/></svg></div>
<div class="sunk" style="left:9px;top:28px;width:13px;height:13px"></div>
<div class="t" style="left:25px;top:29px">Первое значение</div>
<div class="sunk" style="left:11px;top:46px;width:105px;height:19px"></div>
<div class="sunk" style="left:9px;top:77px;width:13px;height:13px"><svg width="13" height="13" style="display:block"><path d="M3 5v3l2 2l5-5v-3l-5 5z" fill="#000"/></svg></div>
<div class="t" style="left:25px;top:78px">Второе значение</div>
<div class="sunk" style="left:11px;top:98px;width:105px;height:19px"><span class="t" style="left:4px;top:3px">0</span></div>
<div class="pb" style="left:29px;top:131px"><span class="t" style="left:31px;top:5px">Да</span></div>
<div class="pb" style="left:156px;top:131px;box-shadow:inset 0 0 0 1px #000,inset -2px -2px 0 #000,inset 2px 2px 0 #fff,inset -3px -3px 0 #808080"><span class="t" style="left:19px;top:5px">Отмена</span><div class="a" style="left:4px;top:4px;width:67px;height:15px;border:1px dotted #000"></div></div>
<div class="a" style="left:128px;top:35px;width:125px;height:86px;border:1px solid #808080;box-shadow:inset 1px 1px 0 #fff,1px 1px 0 #fff"></div>
<div class="t" style="left:135px;top:30px;background:#c0c0c0;padding:0 2px">Тип данных</div>
<svg class="rd" style="left:139px;top:50px" width="12" height="12" shape-rendering="auto"><use href="#rad"/></svg><svg class="rd" style="left:196px;top:50px" width="12" height="12" shape-rendering="auto"><use href="#rad"/></svg><svg class="rd" style="left:139px;top:74px" width="12" height="12" shape-rendering="auto"><use href="#rad"/><rect x="4" y="4" width="4" height="4" rx="1" fill="#000"/></svg><svg class="rd" style="left:196px;top:74px" width="12" height="12" shape-rendering="auto"><use href="#rad"/></svg><svg class="rd" style="left:139px;top:98px" width="12" height="12" shape-rendering="auto"><use href="#rad"/></svg><svg class="rd" style="left:196px;top:98px" width="12" height="12" shape-rendering="auto"><use href="#rad"/></svg>
<div class="t" style="left:153px;top:51px">Строка</div>
<div class="t" style="left:211px;top:51px">Дата</div>
<div class="t" style="left:153px;top:75px">Целое</div>
<div class="t" style="left:211px;top:75px">Время</div>
<div class="t" style="left:153px;top:99px">Число</div>
<div class="t" style="left:211px;top:99px">Датавр</div>
</div>

</div>
</body></html>
